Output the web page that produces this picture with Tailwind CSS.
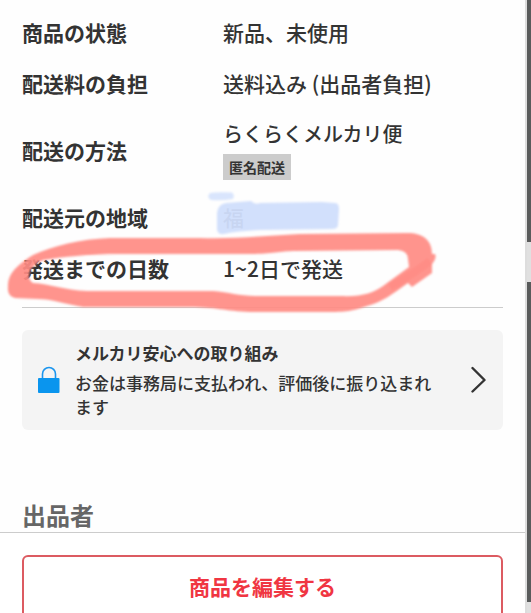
<!DOCTYPE html>
<html lang="ja">
<head>
  <meta charset="UTF-8" />
  <meta name="viewport" content="width=device-width, initial-scale=1.0" />
  <title>商品の情報</title>
  <script src="https://cdn.jsdelivr.net/npm/@tailwindcss/browser@4"></script>
</head>
<body class="flex h-screen overflow-hidden bg-[#fefefe] font-['Noto_Sans_CJK_JP',sans-serif] text-[#333333]">

<div class="relative min-w-0 flex-1">

  <!-- Item details -->
  <main class="px-[22px] pt-[18px]">
    <dl class="grid grid-cols-[201px_1fr] items-center gap-y-[23px] border-b border-[#cccccc] pb-[25px] text-[21px] leading-7">
      <dt class="font-bold">商品の状態</dt>
      <dd class="font-medium">新品、未使用</dd>

      <dt class="font-bold">配送料の負担</dt>
      <dd class="font-medium">送料込み (出品者負担)</dd>

      <dt class="font-bold">配送の方法</dt>
      <dd class="flex flex-col items-start gap-1.5 font-medium">
        <span class="text-[20px]">らくらくメルカリ便</span>
        <span class="bg-[#cccccc] px-1.5 text-[14px] leading-[26px] font-bold">匿名配送</span>
      </dd>

      <dt class="font-bold">配送元の地域</dt>
      <dd class="font-medium">福</dd>

      <dt class="font-bold">発送までの日数</dt>
      <dd class="font-medium">1~2日で発送</dd>
    </dl>

    <a href="#" class="mt-[22px] flex items-center rounded-md bg-[#f4f4f4] py-[11px] pr-4 pl-4">
      <svg class="h-7 w-[22px] shrink-0" viewBox="0 0 22 28" fill="none">
        <path d="M4.5 13V8a6.5 6.5 0 0 1 13 0v5" stroke="#1b95ee" stroke-width="1.6" />
        <rect x="0" y="12" width="21.5" height="15" rx="1" fill="#0a95ee" />
      </svg>
      <span class="ml-[15px] flex flex-1 flex-col gap-1.5 text-[17px] leading-6">
        <span class="font-bold">メルカリ安心への取り組み</span>
        <span class="font-medium">お金は事務局に支払われ、評価後に振り込まれます</span>
      </span>
      <svg class="ml-9 h-7 w-4 shrink-0" viewBox="0 0 16 28" fill="none" stroke="#333333" stroke-width="2.4" stroke-linecap="round" stroke-linejoin="round">
        <path d="M1.5 2 13.500 14 1.500 25.500" />
      </svg>
    </a>

    <h2 class="mt-[67px] text-[24px] leading-[35px] font-bold text-[#666666]">出品者</h2>
  </main>

  <!-- Bottom bar -->
  <footer class="border-t border-[#cccccc] bg-white px-[22px] pt-[22px]">
    <button type="button" class="h-16 w-full rounded-md border-2 border-[#dc5b61] text-[21px] font-bold text-[#f03642]">商品を編集する</button>
  </footer>

  <!-- Marker strokes -->
  <svg class="pointer-events-none absolute top-0 left-0 h-[330px] w-[460px]" viewBox="0 0 460 330">
    <defs>
      <filter id="soft" x="-5%" y="-20%" width="110%" height="140%">
        <feGaussianBlur stdDeviation="0.8" />
      </filter>
    </defs>
    <g fill="#d0defc" filter="url(#soft)">
      <path d="M210 193Q215 192 232 192.500Q235 195 233 199Q222 201 211 200Q206 197 210 193Z" opacity=".8" />
      <path d="M217 213Q218 204 226 203L251 201Q255 205 260 203L322 202L334 203Q339 202 339 209L338 225Q338 229 332 229L260 230Q238 231 224 234Q217 235 217 229Z" opacity=".95" />
    </g>
    <g filter="url(#soft)">
      <path fill="#ff8b83" fill-rule="evenodd" opacity=".92" d="M8 287C8 275 13 268 33 255C53 246 80 239 110 238L200 238C235 239 265 236 300 234L407 233C424 233 432 241 432 254L435 254Q437 258 432 264L432 273L412 287L408 283C392 294 383 302 367 306C350 312 345 312 320 312L250 312C225 311 215 307 190 307L83 307C65 304 52 299 37 299L15 298Q7 296 8 287ZM30 271Q27 279 33 283C50 284 64 290 87 291L213 291C228 292 240 296 255 296L340 296C362 297 373 293 383 286L409 267L408 259Q408 251 398 250L295 251C280 251 272 254 250 254L117 254C90 254 62 257 43 260Q34 264 30 271Z" />
      <path d="M390 287Q412 275 430 261" fill="none" stroke="#ff7f76" stroke-width="8" opacity=".3" />
    </g>
  </svg>
</div>

<!-- Right edge of the panel -->
<aside class="flex w-1.5 shrink-0 flex-col border-l-2 border-[#dddddd] bg-[#e0e0e0]">
  <div class="h-[242px] bg-[#595b5b]"></div>
  <div class="mt-10 h-80 bg-[#595b5b]"></div>
</aside>

</body>
</html>
